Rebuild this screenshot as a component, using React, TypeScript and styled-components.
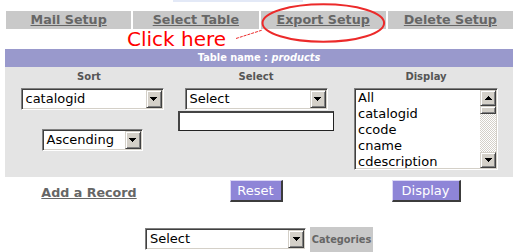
import React from "react";
import styled, { createGlobalStyle } from "styled-components";

const GlobalStyle = createGlobalStyle`
  html, body {
    margin: 0;
    padding: 0;
    background: #fff;
  }
  body {
    font-family: "DejaVu Sans", Verdana, sans-serif;
  }
`;

const font = `"DejaVu Sans", Verdana, sans-serif`;

const tabs = ["Mail Setup", "Select Table", "Export Setup", "Delete Setup"];
const fields = ["All", "catalogid", "ccode", "cname", "cdescription"];

const Arrow = ({ up }: { up?: boolean }) => (
  <svg width="7" height="4" viewBox="0 0 7 4" shapeRendering="crispEdges">
    <g fill="#000" transform={up ? "translate(0 4) scale(1 -1)" : undefined}>
      <rect x="0" y="0" width="7" height="1" />
      <rect x="1" y="1" width="5" height="1" />
      <rect x="2" y="2" width="3" height="1" />
      <rect x="3" y="3" width="1" height="1" />
    </g>
  </svg>
);

const Select = ({ value, width, shift = 0 }: { value: string; width: number; shift?: number }) => (
  <SelectBox $w={width} $shift={shift}>
    <SelectText>{value}</SelectText>
    <DropButton>
      <Arrow />
    </DropButton>
  </SelectBox>
);

const App = () => {
  return (
    <>
      <GlobalStyle />
      <Page>
        <TopLine />
        <TabBar>
          {tabs.map((t) => (
            <Tab key={t}>
              <TabLink href="#">{t}</TabLink>
            </Tab>
          ))}
        </TabBar>
        <HintRow>
          <Hint>Click here</Hint>
        </HintRow>
        <Annotation width="521" height="60" viewBox="0 0 521 60">
          <ellipse cx="323.3" cy="23" rx="60.8" ry="18.8" fill="none" stroke="#ec2a2a" strokeWidth="2" />
          <line x1="236" y1="38.5" x2="262.5" y2="30" stroke="#ec2a2a" strokeWidth="1" strokeDasharray="3 1" />
        </Annotation>

        <TableHeader>
          Table name : <em>products</em>
        </TableHeader>

        <Panel>
          <Column>
            <Label>Sort</Label>
            <Select value="catalogid" width={143} shift={6} />
            <Spacer $h={19} />
            <Select value="Ascending" width={101} shift={6} />
          </Column>
          <Column>
            <Label>Select</Label>
            <Select value="Select" width={143} />
            <Spacer $h={1} />
            <TextInput />
          </Column>
          <Column>
            <Label>Display</Label>
            <ListBox>
              <Options>
                {fields.map((f) => (
                  <Option key={f}>{f}</Option>
                ))}
              </Options>
              <ScrollBar>
                <ScrollButton>
                  <Arrow up />
                </ScrollButton>
                <Thumb />
                <Track />
                <ScrollButton>
                  <Arrow />
                </ScrollButton>
              </ScrollBar>
            </ListBox>
          </Column>
        </Panel>

        <Actions>
          <ActionCell>
            <RecordLink href="#">Add a Record</RecordLink>
          </ActionCell>
          <ActionCell>
            <PurpleButton $w={53}>Reset</PurpleButton>
          </ActionCell>
          <ActionCell>
            <PurpleButton $w={69}>Display</PurpleButton>
          </ActionCell>
        </Actions>

        <CategoryRow>
          <Select value="Select" width={161} />
          <CategoryTag>Categories</CategoryTag>
        </CategoryRow>
      </Page>
    </>
  );
};

export default App;

const Page = styled.div`
  position: relative;
  width: 508px;
  padding-left: 5px;
  font-family: ${font};
`;

const TopLine = styled.div`
  width: 130px;
  height: 2px;
  margin-left: 168px;
  background: #e3e9f7;
`;

const TabBar = styled.div`
  display: grid;
  grid-template-columns: repeat(4, 1fr);
  gap: 2px;
  margin: 9px 0 0 1px;
  width: 507px;
`;

const Tab = styled.div`
  height: 18px;
  background: #c9c9c9;
  display: flex;
  align-items: center;
  justify-content: center;
`;

const TabLink = styled.a`
  font-size: 12.7px;
  font-weight: bold;
  line-height: 18px;
  color: #666;
  text-decoration: underline;
`;

const HintRow = styled.div`
  height: 20px;
  padding-left: 122px;
`;

const Hint = styled.span`
  font-size: 20px;
  line-height: 20px;
  color: #ff0000;
`;

const Annotation = styled.svg`
  position: absolute;
  left: 0;
  top: 0;
  pointer-events: none;
`;

const TableHeader = styled.div`
  height: 18px;
  line-height: 18px;
  background: #9999cc;
  color: #fff;
  font-size: 9.8px;
  font-weight: bold;
  text-align: center;

  em {
    font-style: italic;
  }
`;

const Panel = styled.div`
  display: grid;
  grid-template-columns: 168px 166px 174px;
  height: 110px;
  background: #e4e4e4;
`;

const Column = styled.div`
  display: flex;
  flex-direction: column;
  align-items: center;
`;

const Label = styled.div`
  height: 21px;
  line-height: 19px;
  font-size: 10px;
  font-weight: bold;
  color: #555;
`;

const Spacer = styled.div<{ $h: number }>`
  height: ${(p) => p.$h}px;
  flex-shrink: 0;
`;

const SelectBox = styled.div<{ $w: number; $shift: number }>`
  box-sizing: border-box;
  width: ${(p) => p.$w}px;
  height: 22px;
  margin-left: ${(p) => p.$shift}px;
  display: flex;
  align-items: stretch;
  padding: 1px;
  background: #fff;
  border: 1px solid;
  border-color: #808080 #fff #fff #808080;
  box-shadow: inset 1px 1px 0 #404040, inset -1px -1px 0 #d4d0c8;
`;

const SelectText = styled.span`
  flex: 1;
  padding-left: 3px;
  font-size: 13px;
  line-height: 18px;
  color: #000;
  white-space: nowrap;
  overflow: hidden;
`;

const DropButton = styled.span`
  box-sizing: border-box;
  width: 16px;
  display: flex;
  align-items: center;
  justify-content: center;
  background: #d4d0c8;
  border: 1px solid;
  border-color: #d4d0c8 #404040 #404040 #d4d0c8;
  box-shadow: inset 1px 1px 0 #fff, inset -1px -1px 0 #808080;
`;

const TextInput = styled.input`
  box-sizing: border-box;
  width: 156px;
  height: 20px;
  margin: 0;
  background: #fff;
  border: 1px solid #222;
  border-top-width: 2px;
  border-left-width: 2px;
  border-color: #444 #222 #222 #444;
  outline: none;
`;

const ListBox = styled.div`
  box-sizing: border-box;
  width: 144px;
  height: 82px;
  display: flex;
  padding: 1px;
  background: #fff;
  border: 1px solid;
  border-color: #808080 #fff #fff #808080;
  box-shadow: inset 1px 1px 0 #404040, inset -1px -1px 0 #d4d0c8;
`;

const Options = styled.div`
  flex: 1;
  overflow: hidden;
`;

const Option = styled.div`
  height: 16px;
  line-height: 16px;
  padding-left: 2px;
  font-size: 13px;
  color: #000;
  white-space: nowrap;
`;

const ScrollBar = styled.div`
  width: 16px;
  display: flex;
  flex-direction: column;
`;

const ScrollButton = styled.div`
  box-sizing: border-box;
  height: 16px;
  display: flex;
  align-items: center;
  justify-content: center;
  background: #d4d0c8;
  border: 1px solid;
  border-color: #d4d0c8 #404040 #404040 #d4d0c8;
  box-shadow: inset 1px 1px 0 #fff, inset -1px -1px 0 #808080;
`;

const Thumb = styled(ScrollButton)`
  height: 8px;
`;

const Track = styled.div`
  flex: 1;
  background: repeating-conic-gradient(#fff 0 25%, #d4d0c8 0 50%) 0 0 / 2px 2px;
`;

const Actions = styled.div`
  display: grid;
  grid-template-columns: 168px 166px 174px;
  height: 25px;
`;

const ActionCell = styled.div`
  display: flex;
  justify-content: center;
  align-items: flex-start;
  padding-top: 3px;
`;

const RecordLink = styled.a`
  margin-top: 5px;
  font-size: 12.7px;
  font-weight: bold;
  line-height: 16px;
  color: #666;
  text-decoration: underline;
`;

const PurpleButton = styled.button<{ $w: number }>`
  box-sizing: border-box;
  width: ${(p) => p.$w}px;
  height: 22px;
  margin: 0;
  padding: 0;
  background: #8e85d7;
  color: #fff;
  font-family: ${font};
  font-size: 13px;
  border-style: solid;
  border-width: 1px 2px 2px 1px;
  border-color: #dcd8f6 #3c3c3c #3c3c3c #dcd8f6;
`;

const CategoryRow = styled.div`
  display: flex;
  justify-content: center;
  align-items: flex-start;
  gap: 4px;
  margin-top: 25px;
  padding-top: 1px;
`;

const CategoryTag = styled.div`
  width: 63px;
  height: 25px;
  margin-top: -1px;
  display: flex;
  align-items: center;
  justify-content: center;
  background: #c9c9c9;
  color: #666;
  font-size: 9.8px;
  font-weight: bold;
`;
